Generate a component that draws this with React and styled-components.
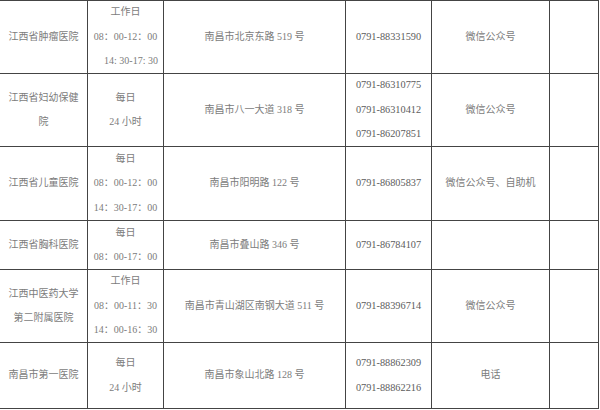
import React from "react";
import styled, { createGlobalStyle } from "styled-components";

const GlobalStyle = createGlobalStyle`
  html, body {
    margin: 0;
    padding: 0;
    background: #ffffff;
  }
`;

// column widths include the right border line
const COLS = "88px 76px 182px 86px 118px 49px";

const rows = [
  {
    height: 73,
    name: ["江西省肿瘤医院"],
    hours: [{ t: "工作日" }, { t: "08：00-12：00" }, { t: "14: 30-17: 30", shift: 11 }],
    address: "南昌市北京东路 519 号",
    phones: ["0791-88331590"],
    channel: "微信公众号",
  },
  {
    height: 73,
    name: ["江西省妇幼保健", "院"],
    hours: [{ t: "每日" }, { t: "24 小时" }],
    address: "南昌市八一大道 318 号",
    phones: ["0791-86310775", "0791-86310412", "0791-86207851"],
    channel: "微信公众号",
  },
  {
    height: 74,
    name: ["江西省儿童医院"],
    hours: [{ t: "每日" }, { t: "08：00-12：00" }, { t: "14：30-17：00" }],
    address: "南昌市阳明路 122 号",
    phones: ["0791-86805837"],
    channel: "微信公众号、自助机",
  },
  {
    height: 49,
    name: ["江西省胸科医院"],
    hours: [{ t: "每日" }, { t: "08：00-17：00" }],
    address: "南昌市叠山路 346 号",
    phones: ["0791-86784107"],
    channel: "",
  },
  {
    height: 73,
    name: ["江西中医药大学", "第二附属医院"],
    hours: [{ t: "工作日" }, { t: "08：00-11：30" }, { t: "14：00-16：30" }],
    address: "南昌市青山湖区南钢大道 511 号",
    phones: ["0791-88396714"],
    channel: "微信公众号",
  },
  {
    height: 66,
    name: ["南昌市第一医院"],
    hours: [{ t: "每日" }, { t: "24 小时" }],
    address: "南昌市象山北路 128 号",
    phones: ["0791-88862309", "0791-88862216"],
    channel: "电话",
  },
];

const Table = styled.div`
  display: grid;
  grid-template-columns: ${COLS};
  grid-template-rows: ${(p) => p.$rows};
  width: 599px;
  border-top: 1px solid #444;
  font-family: "Liberation Serif", "Noto Sans CJK SC", serif;
  font-size: 10px;
  color: #7c7c7c;
`;

const Cell = styled.div`
  box-sizing: border-box;
  display: flex;
  flex-direction: column;
  align-items: center;
  justify-content: center;
  border-right: 1px solid #444;
  border-bottom: 1px solid #444;
  text-align: center;
  overflow: hidden;
`;

const Line = styled.div`
  line-height: 24.5px;
  white-space: nowrap;
  padding-left: ${(p) => p.$shift || 0}px;
`;

const Phone = styled(Line)`
  font-size: 10.3px;
  color: #5c5c5c;
`;

export default function App() {
  return (
    <>
      <GlobalStyle />
      <Table $rows={rows.map((r) => r.height + "px").join(" ")}>
        {rows.map((r, i) => (
          <React.Fragment key={i}>
            <Cell>
              {r.name.map((n) => (
                <Line key={n}>{n}</Line>
              ))}
            </Cell>
            <Cell>
              {r.hours.map((h, j) => (
                <Line key={j} $shift={h.shift}>
                  {h.t}
                </Line>
              ))}
            </Cell>
            <Cell>
              <Line>{r.address}</Line>
            </Cell>
            <Cell>
              {r.phones.map((p) => (
                <Phone key={p}>{p}</Phone>
              ))}
            </Cell>
            <Cell>
              <Line>{r.channel}</Line>
            </Cell>
            <Cell />
          </React.Fragment>
        ))}
      </Table>
    </>
  );
}
